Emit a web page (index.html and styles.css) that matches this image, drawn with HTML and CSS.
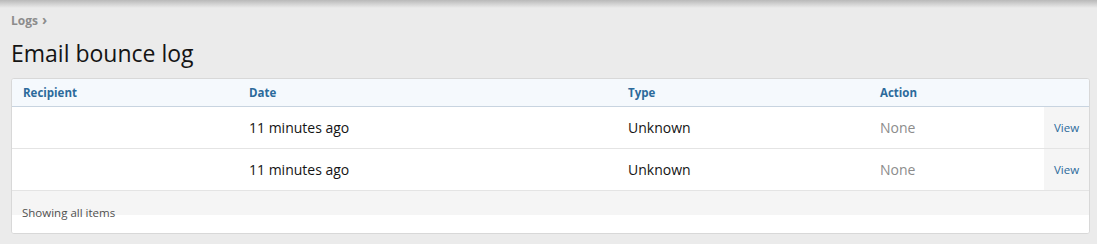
FILE: index.html
```html
<!DOCTYPE html>
<html lang="en">
<head>
    <meta charset="UTF-8">
    <title>Email bounce log</title>
    <link rel="stylesheet" href="styles.css">
</head>
<body>
    <div class="top-shadow"></div>
    <div class="page">
        <div class="breadcrumb">Logs <span class="crumb-sep">&rsaquo;</span></div>
        <h1>Email bounce log</h1>

        <div class="block">
            <table class="data-list">
                <thead>
                    <tr>
                        <th class="col-recipient">Recipient</th>
                        <th class="col-date">Date</th>
                        <th class="col-type">Type</th>
                        <th class="col-action">Action</th>
                        <th class="col-view"></th>
                    </tr>
                </thead>
                <tbody>
                    <tr>
                        <td></td>
                        <td>11 minutes ago</td>
                        <td>Unknown</td>
                        <td class="muted">None</td>
                        <td class="view-cell"><a href="#">View</a></td>
                    </tr>
                    <tr>
                        <td></td>
                        <td>11 minutes ago</td>
                        <td>Unknown</td>
                        <td class="muted">None</td>
                        <td class="view-cell"><a href="#">View</a></td>
                    </tr>
                </tbody>
            </table>
            <div class="block-footer">
                <span>Showing all items</span>
            </div>
        </div>
    </div>
</body>
</html>
```

FILE: styles.css
```css
body {
    font-family: 'Segoe UI', 'Open Sans', 'Noto Sans', sans-serif;
    margin: 0;
    padding: 0;
    background-color: #ebebeb;
    color: #141414;
}
.top-shadow {
    height: 8px;
    background: linear-gradient(to bottom, #b9b9b9, #ebebeb);
}
.page {
    padding: 0 7px 0 11px;
}
.breadcrumb {
    font-size: 12px;
    font-weight: bold;
    color: #8c8c8c;
    line-height: 16px;
    margin-top: 4px;
}
.crumb-sep {
    font-size: 14px;
    margin-left: 1px;
}
h1 {
    font-size: 23px;
    font-weight: normal;
    margin: 6px 0 0 0;
    line-height: 36px;
}
.block {
    margin-top: 7px;
    background-color: #fff;
    border: 1px solid #d8d8d8;
    border-radius: 3px;
    overflow: hidden;
}
.data-list {
    width: 100%;
    border-collapse: collapse;
    table-layout: fixed;
}
.data-list th {
    background-color: #f5f9fd;
    color: #2c6a9b;
    font-size: 11.5px;
    font-weight: bold;
    text-align: left;
    height: 27px;
    padding: 0 0 0 11px;
    border-bottom: 1px solid #c8d4e0;
}
.col-recipient { width: 215px; }
.col-date { width: 368px; }
.col-type { width: 241px; }
.data-list th.col-view {
    width: 45px;
    padding: 0;
}
.data-list td {
    font-size: 14px;
    height: 41px;
    padding: 0 0 0 11px;
    border-bottom: 1px solid #e4e4e4;
}
.data-list td.muted {
    color: #8c8c8c;
}
.data-list td.view-cell {
    background-color: #f5f5f5;
    padding: 0;
    text-align: center;
    font-size: 11.5px;
}
.view-cell a {
    color: #2c6a9b;
    text-decoration: none;
}
.block-footer {
    height: 42px;
    background: linear-gradient(to bottom, #f5f5f5 24px, #fff 24px);
    font-size: 11.5px;
    color: #505050;
    padding-left: 10px;
    line-height: 44px;
}
```
